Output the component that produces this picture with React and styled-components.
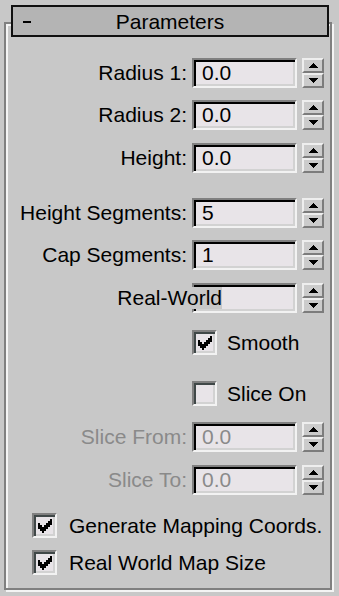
import React from 'react';
import styled, { createGlobalStyle } from 'styled-components';

const Global = createGlobalStyle`
  html, body { margin: 0; padding: 0; background: #c8c8c8; }
  body { font-family: "Liberation Sans", Arial, sans-serif; }
`;

const Page = styled.div`
  width: 339px;
  height: 596px;
  box-sizing: border-box;
  padding-top: 5px;
  background: #c8c8c8;
  overflow: hidden;
  display: flex;
  flex-direction: column;
  font-family: "Liberation Sans", Arial, sans-serif;
  font-size: 21px;
  color: #000;
`;

const TitleBar = styled.div`
  position: relative;
  z-index: 1;
  margin: 0 10px 0 11px;
  height: 32px;
  box-sizing: border-box;
  border: 2px solid #101010;
  background: #b4b4b4;
  display: grid;
  grid-template-columns: 1fr auto 1fr;
  align-items: center;
  padding: 0 10px;
  line-height: 1;
`;

const Collapse = styled.span`
  justify-self: start;
  width: 8px;
  height: 2px;
  margin-top: 2px;
  background: #000;
`;

const Title = styled.span`
  white-space: nowrap;
`;

const Frame = styled.div`
  margin: -15px 7px 0 4px;
  height: 568px;
  box-sizing: border-box;
  border: 2px solid #808080;
  box-shadow: inset 2px 2px 0 #f4f4f4, 2px 2px 0 #f4f4f4;
  padding: 34px 6px 0 0;
  display: flex;
  flex-direction: column;
`;

const Row = styled.div`
  display: grid;
  grid-template-columns: 1fr 105px 22px;
  column-gap: 5px;
  align-items: center;
  height: ${p => p.$h || 30}px;
  margin-top: ${p => p.$mt || 0}px;
`;

const Label = styled.span`
  justify-self: end;
  white-space: nowrap;
  color: ${p => (p.$disabled ? '#8a8a8a' : '#000')};
`;

const OverLabel = styled(Label)`
  position: relative;
  z-index: 1;
  margin-right: -35px;
  height: 22px;
  line-height: 22px;
  background: #c8c8c8;
`;

const Field = styled.div`
  height: 30px;
  box-sizing: border-box;
  background: #e8e4e8;
  border-top: 2px solid #808080;
  border-left: 2px solid #808080;
  border-right: 2px solid #f2f2f2;
  border-bottom: 2px solid #f2f2f2;
  box-shadow: inset 2px 2px 0 #000, inset -2px -2px 0 #d2d2d2;
  padding-left: 8px;
  display: flex;
  align-items: center;
  color: ${p => (p.$disabled ? '#8a8a8a' : '#000')};
`;

const Spinner = styled.div`
  height: 30px;
  display: flex;
  flex-direction: column;
`;

const SpinHalf = styled.div`
  flex: 1;
  box-sizing: border-box;
  background: #cbcbcb;
  border-top: 2px solid #eeeeee;
  border-left: 2px solid #eeeeee;
  border-right: 2px solid #7c7c7c;
  border-bottom: 2px solid #7c7c7c;
  display: flex;
  align-items: center;
  justify-content: center;
`;

const Arrow = ({ down }) => (
  <svg width="10" height="5" viewBox="0 0 10 5" shapeRendering="crispEdges">
    <polygon points={down ? '0,0 10,0 5,5' : '0,5 10,5 5,0'} fill="#000" />
  </svg>
);

const SpinRow = ({ label, value, mt, disabled }) => (
  <Row $mt={mt}>
    <Label $disabled={disabled}>{label}</Label>
    <Field $disabled={disabled}>{value}</Field>
    <Spinner>
      <SpinHalf><Arrow /></SpinHalf>
      <SpinHalf><Arrow down /></SpinHalf>
    </Spinner>
  </Row>
);

const CheckCell = styled.label`
  grid-column: 2 / 4;
  display: flex;
  align-items: center;
  gap: 10px;
  white-space: nowrap;
`;

const CheckLine = styled.label`
  display: flex;
  align-items: center;
  gap: 12px;
  height: 25px;
  margin-left: 26px;
  margin-top: ${p => p.$mt || 0}px;
  white-space: nowrap;
`;

const Box = styled.span`
  width: 25px;
  height: 25px;
  flex: none;
  box-sizing: border-box;
  background: #e8e4e8;
  border-top: 2px solid #808080;
  border-left: 2px solid #808080;
  border-right: 2px solid #f2f2f2;
  border-bottom: 2px solid #f2f2f2;
  box-shadow: inset 2px 2px 0 #404848, inset -2px -2px 0 #d2d2d2;
  display: flex;
  align-items: center;
  justify-content: center;
`;

const CheckMark = () => (
  <svg width="14" height="14" viewBox="0 0 7 7" shapeRendering="crispEdges">
    <path
      fill="#000"
      d="M6 0h1v1h-1z M5 1h2v1h-2z M0 2h1v1h-1z M4 2h3v1h-3z M0 3h2v1h-2z M3 3h3v1h-3z M0 4h5v1h-5z M1 5h3v1h-3z M2 6h1v1h-1z"
    />
  </svg>
);

const Check = ({ checked }) => <Box>{checked && <CheckMark />}</Box>;

export default function App() {
  return (
    <Page>
      <Global />
      <TitleBar>
        <Collapse />
        <Title>Parameters</Title>
        <span />
      </TitleBar>
      <Frame>
        <SpinRow label="Radius 1:" value="0.0" />
        <SpinRow label="Radius 2:" value="0.0" mt={12} />
        <SpinRow label="Height:" value="0.0" mt={13} />
        <SpinRow label="Height Segments:" value="5" mt={25} />
        <SpinRow label="Cap Segments:" value="1" mt={12} />
        <Row $mt={13}>
          <OverLabel>Real-World</OverLabel>
          <Field />
          <Spinner>
            <SpinHalf><Arrow /></SpinHalf>
            <SpinHalf><Arrow down /></SpinHalf>
          </Spinner>
        </Row>
        <Row $mt={17} $h={25}>
          <CheckCell>
            <Check checked />
            Smooth
          </CheckCell>
        </Row>
        <Row $mt={26} $h={25}>
          <CheckCell>
            <Check />
            Slice On
          </CheckCell>
        </Row>
        <SpinRow label="Slice From:" value="0.0" mt={16} disabled />
        <SpinRow label="Slice To:" value="0.0" mt={13} disabled />
        <CheckLine $mt={18}>
          <Check checked />
          Generate Mapping Coords.
        </CheckLine>
        <CheckLine $mt={12}>
          <Check checked />
          Real World Map Size
        </CheckLine>
      </Frame>
    </Page>
  );
}
